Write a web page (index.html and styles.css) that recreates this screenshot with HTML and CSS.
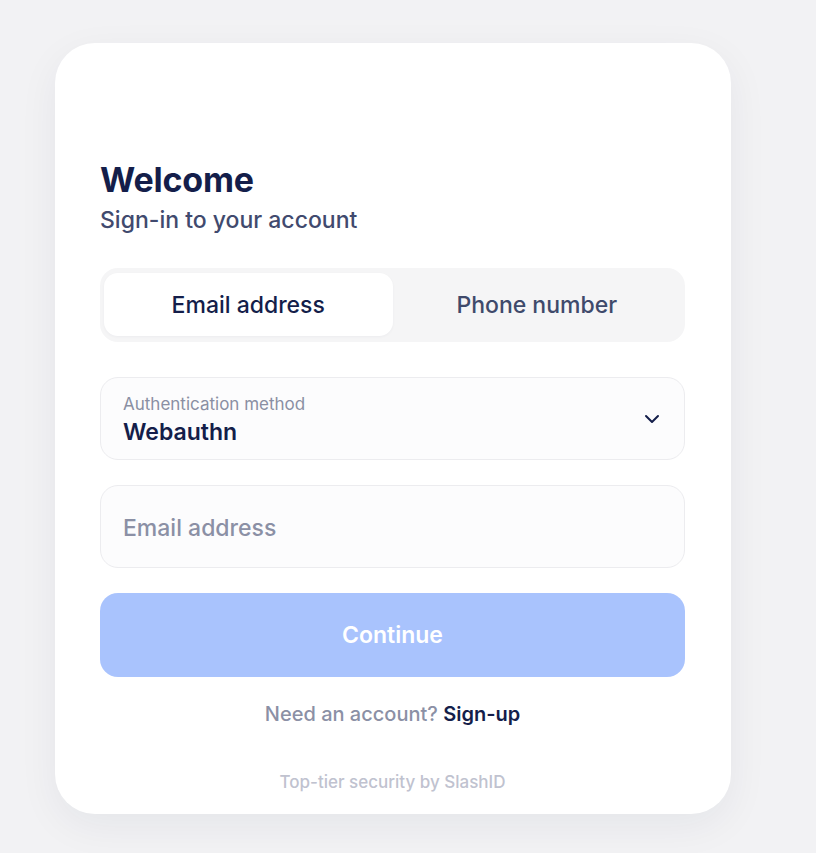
FILE: index.html
```html
<!DOCTYPE html>
<html lang="en">
<head>
<meta charset="utf-8">
<title>Sign in</title>
<link rel="stylesheet" href="styles.css">
</head>
<body>
<main class="page">
  <section class="card">
    <header class="intro">
      <h1 class="title">Welcome</h1>
      <p class="subtitle">Sign-in to your account</p>
    </header>
    <div class="tabs">
      <button class="tab tab-active">Email address</button>
      <button class="tab">Phone number</button>
    </div>
    <div class="field select">
      <div class="select-text">
        <span class="select-label">Authentication method</span>
        <span class="select-value">Webauthn</span>
      </div>
      <svg class="chevron" width="16" height="16" viewBox="0 0 16 16" fill="none"><path d="M2 5l6 6 6-6" stroke="#141e4a" stroke-width="2" stroke-linecap="round" stroke-linejoin="round"/></svg>
    </div>
    <div class="field input">
      <span class="placeholder">Email address</span>
    </div>
    <button class="continue">Continue</button>
    <p class="signup">Need an account? <a class="signup-link">Sign-up</a></p>
    <p class="footer">Top-tier security by SlashID</p>
  </section>
</main>
</body>
</html>
```

FILE: styles.css
```css
* { box-sizing: border-box; }
html, body { margin: 0; padding: 0; }
body {
  background: #f2f2f4;
  font-family: Inter, "Noto Sans", sans-serif;
  width: 816px;
  height: 853px;
  overflow: hidden;
}
.page {
  padding: 43px 0 0 55px;
}
.card {
  width: 676px;
  height: 771px;
  background: #ffffff;
  border-radius: 40px;
  box-shadow: 0 12px 40px rgba(20, 30, 74, 0.06);
  padding: 117px 46px 0 45px;
  display: flex;
  flex-direction: column;
}
.title {
  margin: 0;
  font-size: 34px;
  line-height: 40px;
  font-weight: 700;
  color: #141e4a;
  letter-spacing: -0.2px;
}
.subtitle {
  margin: 5px 0 0;
  font-size: 23px;
  line-height: 30px;
  font-weight: 500;
  color: #414a6e;
}
.tabs {
  margin-top: 33px;
  height: 74px;
  background: #f5f5f6;
  border-radius: 18px;
  padding: 5px 4px 6px;
  display: grid;
  grid-template-columns: 1fr 1fr;
}
.tab {
  border: 0;
  background: transparent;
  font-family: inherit;
  font-size: 23px;
  font-weight: 500;
  color: #3f4a6b;
  border-radius: 14px;
  padding: 0;
}
.tab-active {
  background: #ffffff;
  color: #141e4a;
  box-shadow: 0 1px 3px rgba(20, 30, 74, 0.04);
}
.field {
  height: 83px;
  background: #fcfcfd;
  border: 1.5px solid #ececef;
  border-radius: 18px;
  padding: 0 24px 0 22px;
  display: flex;
  align-items: center;
}
.select {
  margin-top: 35px;
  justify-content: space-between;
}
.select-text {
  display: flex;
  flex-direction: column;
  gap: 4px;
  margin-top: 3px;
}
.select-label {
  font-size: 17px;
  line-height: 20px;
  color: #8a8fa3;
}
.select-value {
  font-size: 23px;
  line-height: 28px;
  font-weight: 600;
  color: #141e4a;
}
.input { margin-top: 25px; }
.placeholder {
  font-size: 23px;
  color: #8b90a5;
  font-weight: 500;
  margin-top: 2px;
}
.continue {
  margin-top: 25px;
  height: 84px;
  border: 0;
  border-radius: 18px;
  background: #a9c3fd;
  color: #ffffff;
  font-family: inherit;
  font-size: 23px;
  font-weight: 600;
}
.signup {
  margin: 25px 0 0;
  text-align: center;
  font-size: 20px;
  line-height: 24px;
  font-weight: 500;
  color: #8b90a5;
}
.signup-link {
  color: #141e4a;
  font-weight: 600;
}
.footer {
  margin: 46px 0 0;
  text-align: center;
  font-size: 17px;
  line-height: 20px;
  font-weight: 500;
  color: #c0c2cf;
}
```
